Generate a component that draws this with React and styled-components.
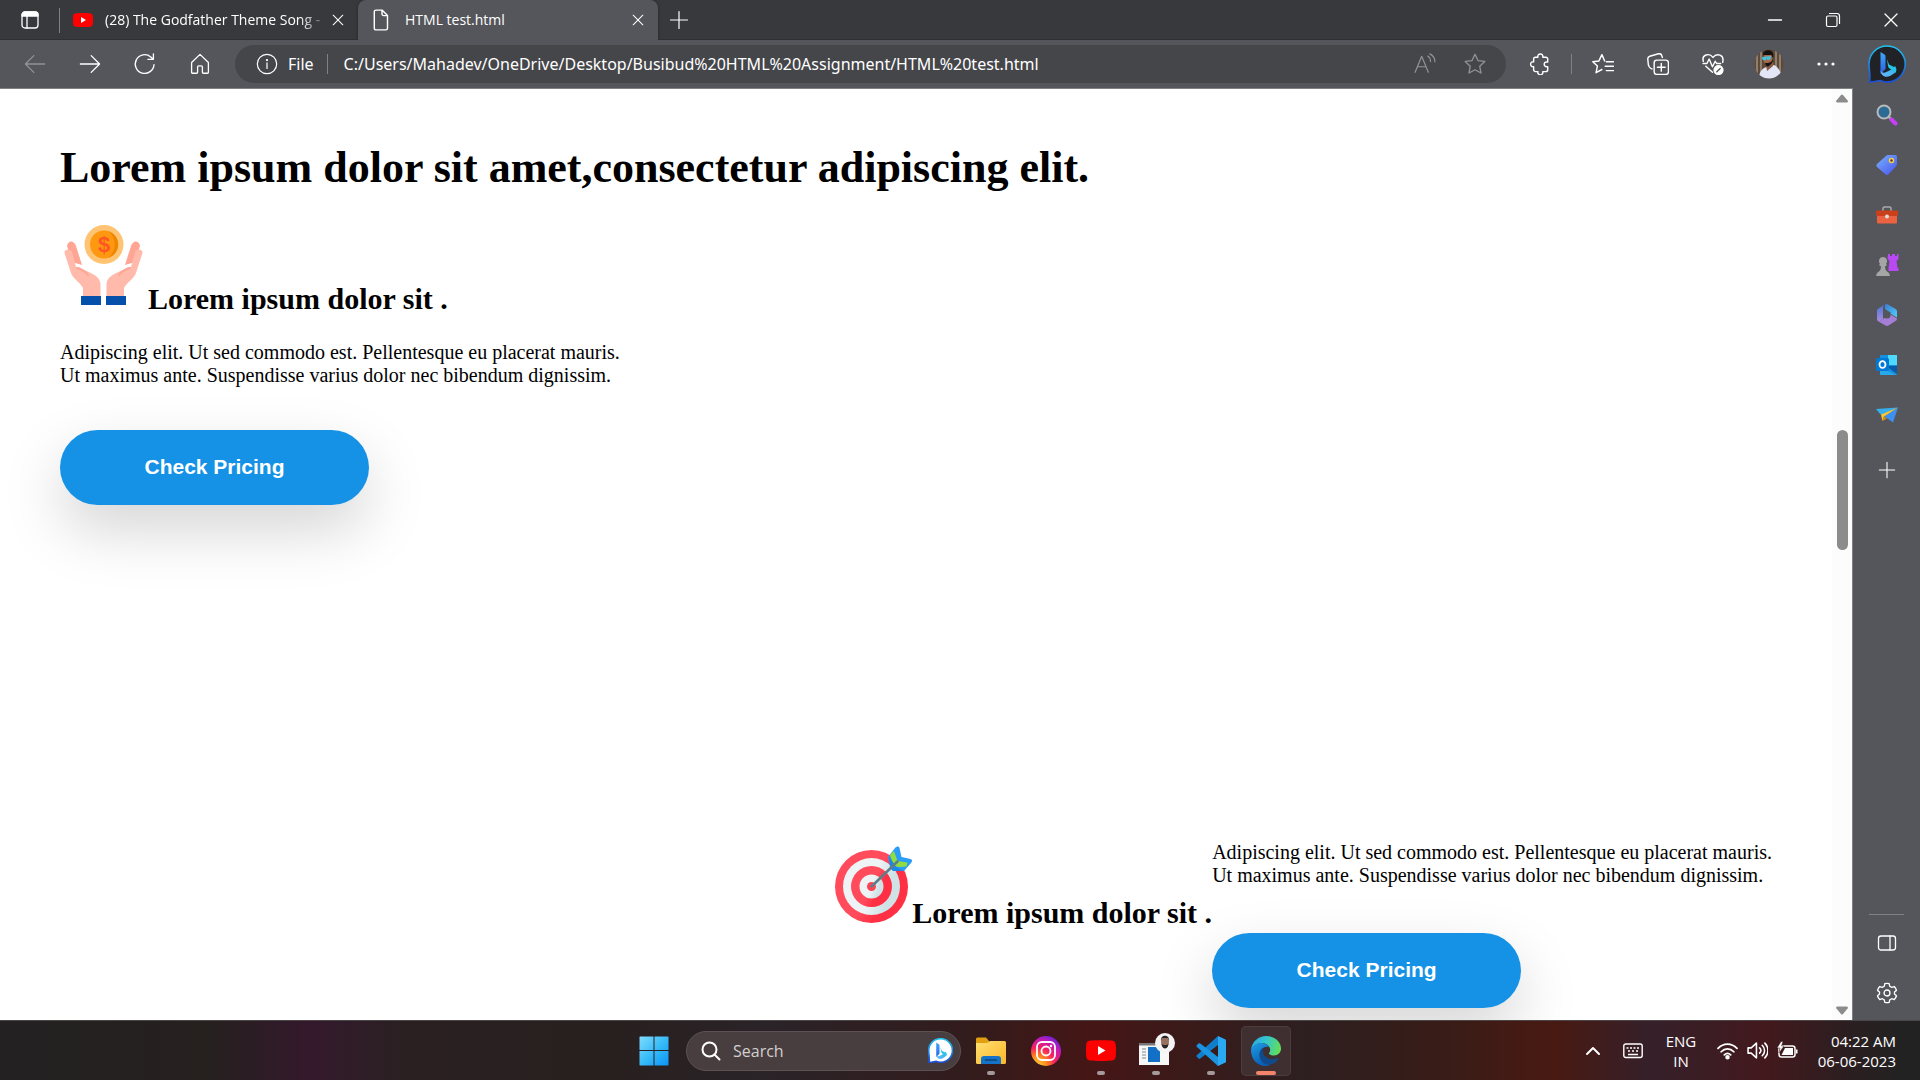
import React from 'react';
import styled, { createGlobalStyle, css } from 'styled-components';

const GlobalStyle = createGlobalStyle`
  *, *::before, *::after { box-sizing: border-box; }
  html, body { margin: 0; padding: 0; overflow: hidden; }
  body { font-family: 'Open Sans', 'Noto Sans', sans-serif; background: #55565b; }
  button, input { font: inherit; color: inherit; border: 0; background: none; padding: 0; outline: 0; }
  svg { display: block; flex: none; }
`;

const Shell = styled.div`
  display: flex;
  flex-direction: column;
  height: 100vh;
`;

/* ---------- title bar ---------- */

const TitleBar = styled.header`
  display: flex;
  height: 40px;
  flex: none;
  background: #38393c;
  color: #fff;
  box-shadow: inset 0 -1px 0 #2f3033;
`;

const IconButton = styled.button`
  display: flex;
  align-items: center;
  justify-content: center;
  flex: none;
  width: ${(p) => p.$w || 55}px;
  height: ${(p) => p.$h || 40}px;
  color: ${(p) => (p.$dim ? '#919296' : '#fff')};
`;

const Separator = styled.span`
  flex: none;
  align-self: center;
  width: 1px;
  height: ${(p) => p.$h || 20}px;
  margin: 0 ${(p) => p.$gap || 0}px;
  background: #808185;
`;

const Tab = styled.div`
  display: flex;
  align-items: center;
  gap: 12px;
  flex: 0 1 ${(p) => (p.$active ? 300 : 298)}px;
  min-width: 0;
  padding: 0 12px 0 13px;
  font-size: 14px;
  line-height: 20px;
  ${(p) =>
    p.$active &&
    css`
      background: #55565b;
      border-radius: 8px 8px 0 0;
      box-shadow: 0 0 3px #232426;
    `}
`;

const TabTitle = styled.span`
  flex: 1;
  min-width: 0;
  margin-right: -8px;
  overflow: hidden;
  white-space: nowrap;
  mask-image: ${(p) => (p.$fade ? 'linear-gradient(90deg, #000 88%, rgba(0, 0, 0, 0.1))' : 'none')};
`;

const WindowControls = styled.div`
  display: flex;
  margin-left: auto;
`;

/* ---------- toolbar ---------- */

const Toolbar = styled.div`
  display: flex;
  align-items: center;
  flex: none;
  height: 48px;
  padding-left: 7px;
  background: #55565b;
  color: #fff;
`;

const AddressBar = styled.form`
  display: flex;
  align-items: center;
  flex: 1;
  min-width: 0;
  height: 38px;
  margin: 0 7px 0 8px;
  padding: 0 6px 0 21px;
  border-radius: 19px;
  background: #45464a;
  font-family: 'Noto Sans', sans-serif;
  font-size: 16px;
`;

const SchemeLabel = styled.label`
  margin: 0 13px 0 10px;
`;

const AddressInput = styled.input`
  flex: 1;
  min-width: 0;
  height: 30px;
  margin-left: 16px;
`;

const BingButton = styled(IconButton)`
  width: 66px;
`;

/* ---------- body ---------- */

const Body = styled.div`
  display: flex;
  flex: 1;
  min-height: 0;
`;

const Viewport = styled.div`
  display: flex;
  flex: 1;
  min-width: 0;
  min-height: 0;
  border-top: 1px solid #808185;
  border-right: 1px solid #808185;
  background: #fff;
`;

const Page = styled.main`
  flex: 1;
  min-width: 0;
  overflow: hidden;
  padding: 54px 60px 0;
  color: #000;
  font-family: 'Liberation Serif', 'Times New Roman', serif;
  font-size: 20px;
  line-height: 23px;
`;

const Title = styled.h1`
  margin: 0 0 28px;
  font-size: 44px;
  line-height: 50px;
`;

const Feature = styled.section`
  display: ${(p) => (p.$row ? 'flex' : 'block')};
  justify-content: flex-end;
  margin-top: ${(p) => (p.$row ? 316 : 0)}px;
`;

const FeatureTitle = styled.h2`
  display: flex;
  align-items: baseline;
  margin: ${(p) => p.$top || 0}px 0 25px;
  font-size: 30px;
  line-height: 34px;
  white-space: nowrap;
`;

const Copy = styled.p`
  margin: ${(p) => p.$top || 0}px 0 ${(p) => p.$bottom}px;
`;

const PricingButton = styled.button`
  display: block;
  width: 309px;
  height: 75px;
  padding-bottom: 2px;
  border-radius: 38px;
  background: #1592e6;
  box-shadow: 0 25px 60px rgba(0, 0, 0, 0.17);
  color: #fff;
  font-family: 'Liberation Sans', Arial, sans-serif;
  font-size: 21px;
  font-weight: 700;
  line-height: 24px;
`;

const ScrollTrack = styled.div`
  display: flex;
  flex-direction: column;
  align-items: center;
  flex: none;
  width: 20px;
  padding: 5px 0;
  background: #fcfcfc;
`;

const Spacer = styled.span`
  flex: ${(p) => p.$grow} 1 0;
`;

const Thumb = styled.span`
  flex: none;
  width: 11px;
  height: 120px;
  border-radius: 6px;
  background: #8b8b8b;
`;

const Sidebar = styled.aside`
  display: flex;
  flex-direction: column;
  align-items: center;
  flex: none;
  width: 67px;
  padding: 2px 0;
  background: #55565b;
  color: #fff;
`;

const SideRule = styled.hr`
  width: 35px;
  height: 1px;
  margin: auto auto 3px;
  border: 0;
  background: #808185;
`;

/* ---------- taskbar ---------- */

const Taskbar = styled.footer`
  display: grid;
  grid-template-columns: 1fr auto 1fr;
  flex: none;
  height: 60px;
  border-top: 1px solid #4b4546;
  background: linear-gradient(90deg, #232122 0%, #26201f 11%, #34192c 16%, #2a2022 21%, #28201f 32%, #2a2328 40%, #321c1d 50%, #451615 57%, #381b1b 63%, #2d1f20 68%, #341d19 73%, #481a12 81%, #35202a 86%, #43191d 92%, #2c1e20 96%, #222 99%);
  color: #fff;
  font-size: 15px;
  line-height: 20px;
`;

const TaskGroup = styled.div`
  display: flex;
  align-items: center;
  grid-column: 2;
`;

const TaskSearch = styled.label`
  display: flex;
  align-items: center;
  width: 275px;
  height: 40px;
  margin: 0 2px 0 5px;
  padding: 0 7px 0 14px;
  border: 1px solid #5d5153;
  border-radius: 20px;
  background: #483e40;
`;

const TaskInput = styled.input`
  flex: 1;
  min-width: 0;
  margin-left: 12px;
  font-size: 16px;
  line-height: 24px;
  &::placeholder { color: #d3cecf; opacity: 1; }
`;

const TaskButton = styled.button`
  display: flex;
  align-items: center;
  justify-content: center;
  position: relative;
  width: ${(p) => (p.$active ? 50 : 55)}px;
  height: 50px;
  margin: 0 ${(p) => (p.$active ? 3 : 0)}px;
  border-radius: 5px;
  ${(p) =>
    p.$active &&
    css`
      background: #3f2f31;
      box-shadow: inset 0 0 0 1px #4b3c3e;
    `}
  &::after {
    content: '';
    display: ${(p) => (p.$running || p.$active ? 'block' : 'none')};
    position: absolute;
    bottom: 1px;
    width: ${(p) => (p.$active ? 20 : 8)}px;
    height: 4px;
    border-radius: 2px;
    background: ${(p) => (p.$active ? '#f4836b' : '#a59a9b')};
  }
`;

const Tray = styled.div`
  display: flex;
  align-items: center;
  justify-content: flex-end;
  padding-right: 24px;
`;

const TrayText = styled.div`
  width: ${(p) => p.$w}px;
  text-align: ${(p) => p.$align};
  white-space: nowrap;
`;

const TrayIcons = styled.div`
  display: flex;
  align-items: center;
  gap: 9px;
  margin-left: 8px;
`;

/* ---------- icons ---------- */

const Line = ({ size = 20, w = 1.3, children, box = 20 }) => (
  <svg width={size} height={size} viewBox={`0 0 ${box} ${box}`} fill="none" stroke="currentColor" strokeWidth={w} strokeLinecap="round" strokeLinejoin="round" aria-hidden="true">
    {children}
  </svg>
);

const TabActionsIcon = () => (
  <Line>
    <rect x="2" y="2" width="16" height="16" rx="3" />
    <path d="M2 6V5a3 3 0 0 1 3-3h10a3 3 0 0 1 3 3v1z" fill="currentColor" />
    <path d="M7 6v12" />
  </Line>
);
const YouTubeIcon = ({ w = 20, h = 14 }) => (
  <svg width={w} height={h} viewBox="0 0 30 21" aria-hidden="true">
    <path d="M4 .6C8 0 22 0 26 .6c2.500.4 3.500 1.500 3.700 4 .4 4 .4 8 0 12-.2 2.500-1.200 3.600-3.700 3.900-4 .6-18 .6-22 0C1.500 20.100.5 19 .3 16.500c-.4-4-.4-8 0-12C.5 2.100 1.500.9 4 .6z" fill="#f00" />
    <path d="M12 6v9l7.500-4.500z" fill="#fff" />
  </svg>
);
const FileIcon = () => (
  <Line size={22} w={1.3}>
    <path d="M4.500 1h5.500l5 5v11.500a1.500 1.500 0 0 1-1.500 1.500h-9A1.500 1.500 0 0 1 3 17.500v-15A1.500 1.500 0 0 1 4.500 1zM10 1v3.500A1.500 1.500 0 0 0 11.500 6H15" />
  </Line>
);
const CloseIcon = ({ size = 16 }) => (
  <Line size={size}><path d="M4 4l12 12M16 4L4 16" /></Line>
);
const PlusIcon = ({ size = 20 }) => (
  <Line size={size} w={1.2}><path d="M10 1.500v17M1.500 10h17" /></Line>
);
const MinIcon = () => <Line><path d="M3.500 10h13" /></Line>;
const RestoreIcon = () => (
  <Line w={1.200}>
    <rect x="3.500" y="6" width="10.500" height="10.500" rx="1.500" />
    <path d="M6.500 3.500h7.500a2.500 2.500 0 0 1 2.500 2.500v7.500" />
  </Line>
);
const BackIcon = () => <Line size={24} w={1.1}><path d="M18 10H2M9 3L2 10l7 7" /></Line>;
const ForwardIcon = () => <Line size={24} w={1.1}><path d="M2 10h16M11 3l7 7-7 7" /></Line>;
const RefreshIcon = () => (
  <Line size={24} w={1.1}><path d="M17.500 10.500a7.800 7.800 0 1 1-2.700-6.400l2 1.900M17 1.500v4.600h-4.600" /></Line>
);
const HomeIcon = () => (
  <Line size={24} w={1.1}>
    <path d="M3 8.800L10 2l7 6.800v8a.9.9 0 0 1-.9.900h-3.200a.9.900 0 0 1-.9-.9v-4.300a1 1 0 0 0-1-1H9a1 1 0 0 0-1 1v4.300a.9.900 0 0 1-.9.900H3.900a.9.900 0 0 1-.9-.9z" />
  </Line>
);
const InfoIcon = () => (
  <Line size={22} w={1.100}>
    <circle cx="10" cy="10" r="8.800" />
    <path d="M10 9v5" />
    <circle cx="10" cy="6.400" r=".5" fill="currentColor" />
  </Line>
);
const ReadAloudIcon = () => (
  <Line size={22} w={1.100}>
    <path d="M1 17.500L7 3l6 14.500M3.200 12.500h7.600M12.500 2.800c1.600 1 2.500 2.800 2.500 5M14.500.8C17.300 2.300 19 4.800 19 8" />
  </Line>
);
const starPath = 'M10 1.200l2.700 5.700 6.200.8-4.600 4.300 1.200 6.200L10 15.200l-5.500 3 1.200-6.200L1.100 7.700l6.200-.8z';
const StarIcon = () => <Line size={22} w={1.200}><path d={starPath} /></Line>;
const PuzzleIcon = () => (
  <Line size={22} w={1.300}>
    <path d="M4.700 3.800h2.500a2.300 2.300 0 1 1 4.400 0h2.800A1.700 1.700 0 0 1 16.100 5.500v2.600h-1a2.200 2.200 0 1 0 0 4.400h1v2.700a1.700 1.700 0 0 1-1.700 1.700h-2.800a2.300 2.300 0 1 1-4.400 0H5a1.700 1.700 0 0 1-1.700-1.700v-2.700a2.300 2.300 0 1 1 0-4.500V5.500A1.600 1.600 0 0 1 4.700 3.800z" />
  </Line>
);
const FavoritesIcon = () => (
  <Line size={22} w={1.300}>
    <path d="M11.500 7.200L9 1.500 6.300 7.200l-5.600.700 4.200 4-1.200 6 5.300-2.900M13 8h6.500M12 12h7.500M13 16h6.500" />
  </Line>
);
const CollectionsIcon = () => (
  <Line size={22} w={1.300}>
    <rect x="6.500" y="6.500" width="13" height="13" rx="2.500" />
    <path d="M13 9.500v7M9.500 13h7M4.500 14.500l-1-.5C2 13.200 1.500 12 1.200 10.500L.7 5.500A2.500 2.500 0 0 1 2.500 3l8-2.300A2.500 2.500 0 0 1 13.500 2.500l.5 1.500" />
  </Line>
);
const HealthIcon = () => (
  <Line size={22} w={1.300}>
    <path d="M9.500 17.500L3.500 12M1.200 7.500C-.5 1.500 6.500-.5 10 4c3.500-4.500 10.500-2.500 8.800 4.500M1 9.500h3.500l2-4 3 7 2.500-5 1.200 2H17" />
    <circle cx="15" cy="15.500" r="4" fill="currentColor" />
    <path d="M13.500 17l3-3" stroke="#55565b" />
  </Line>
);
const DotsIcon = () => (
  <svg width="20" height="20" viewBox="0 0 20 20" fill="currentColor" aria-hidden="true">
    <circle cx="3" cy="10" r="1.600" /><circle cx="10" cy="10" r="1.600" /><circle cx="17" cy="10" r="1.600" />
  </svg>
);
const Avatar = () => (
  <svg width="30" height="30" viewBox="0 0 30 30" aria-hidden="true">
    <clipPath id="face"><circle cx="15" cy="15" r="14.500" /></clipPath>
    <g clipPath="url(#face)">
      <path d="M0 0h30v30H0z" fill="#5d4a3a" />
      <path d="M3 0v30M7 0v30M22 0v30M26 0v30" stroke="#a3927e" strokeWidth="1.500" />
      <path d="M5 30c0-7 3-11 8-12l7-2c4 2 7 6 8 14z" fill="#e3e6f7" />
      <path d="M12 16l1 6 6-5v-4z" fill="#8c5a40" />
      <ellipse cx="14" cy="10" rx="4.500" ry="6.500" fill="#a8694b" />
      <path d="M11 14c1 4 3 4 4 3s4-3 4-7l-2 3-3 1zM9 6c0-5 5-5 7-4.500 3 .5 4 4 3 8L17.500 6z" fill="#15120f" />
      <path d="M8 8l9-1-.5 3.500-3 .5-1-1.500-1 2-3-.5z" fill="#42c3dd" />
    </g>
  </svg>
);
const BingIcon = ({ size = 38, light }) => {
  const id = light ? 'bl' : 'bd';
  return (
    <svg width={size} height={size} viewBox="0 0 38 38" aria-hidden="true">
      <defs>
        <linearGradient id={`${id}a`} x1="0" y1="0" x2="0" y2="1"><stop offset="0" stopColor="#20c3ee" /><stop offset="1" stopColor="#1b4fd8" /></linearGradient>
        <linearGradient id={`${id}b`} x1="0" y1="0" x2="0" y2="1"><stop offset="0" stopColor="#3fa9f7" /><stop offset="1" stopColor="#2b5fe8" /></linearGradient>
        <linearGradient id={`${id}c`} x1="0" y1="1" x2="1" y2="0"><stop offset="0" stopColor="#6fb8ff" /><stop offset="1" stopColor="#1fb5ea" /></linearGradient>
      </defs>
      <path d="M19 1a18 18 0 1 1-7 34.500c-3 .5-7 1.700-10.500 1.500C3 33 1 26 1 19A18 18 0 0 1 19 1z" fill={light ? '#fff' : '#202226'} stroke={`url(#${id}a)`} strokeWidth={light ? 2.5 : 1.600} />
      <path d="M12.500 7l4 2.500a2 2 0 0 1 1 1.700V24l-5 5z" fill={`url(#${id}b)`} />
      <path d="M12.500 25c0 6 5 8 9.500 6l4-2.500c3-2 3-5 1-7.500-2 3-6 5-10 6.500-2 .7-4-.5-4.500-2.500z" fill={`url(#${id}c)`} />
      <path d="M19 14l2 5.500 3 1.500c4 2 5 4.500 3.500 7.500 1-4-7-3-7.500-7.500z" fill="#24c8e6" />
    </svg>
  );
};
const UpArrow = () => <svg width="12" height="9" viewBox="0 0 12 9" aria-hidden="true"><path d="M5 1q1-1 2 0l5 6q0 1-1 1.500H1Q0 8 0 7z" fill="#8b8b8b" /></svg>;
const DownArrow = () => <svg width="12" height="9" viewBox="0 0 12 9" aria-hidden="true"><path d="M5 8q1 1 2 0l5-6q0-1-1-1.500H1Q0 1 0 2z" fill="#8b8b8b" /></svg>;

const SearchColor = () => (
  <svg width="22" height="22" viewBox="0 0 22 22" aria-hidden="true">
    <path d="M12.500 12.500l4 4" stroke="#aaa" strokeWidth="2.500" />
    <path d="M15.500 15.500l4 4" stroke="#c63ff5" strokeWidth="4" strokeLinecap="round" />
    <circle cx="8" cy="8" r="6.500" fill="#2b6b96" stroke="#b9b9b9" strokeWidth="2" />
  </svg>
);
const TagColor = () => (
  <svg width="22" height="22" viewBox="0 0 22 22" aria-hidden="true">
    <defs><linearGradient id="tag" x1="0" y1="0" x2="1" y2="1"><stop offset="0" stopColor="#77b5ff" /><stop offset="1" stopColor="#4a50ec" /></linearGradient></defs>
    <path d="M12 1h7.500A1.500 1.500 0 0 1 21 2.500V10c0 1-.3 1.500-1 2.200l-7.500 8a2 2 0 0 1-3 0L1 13c-.8-.8-.8-2 0-3l9-8c.6-.6 1.200-1 2-1z" fill="url(#tag)" />
    <circle cx="15.500" cy="6.500" r="2" fill="#3b3d50" stroke="#ffce3d" strokeWidth="1.500" />
  </svg>
);
const ToolboxColor = () => (
  <svg width="22" height="22" viewBox="0 0 22 22" aria-hidden="true">
    <path d="M7 7V4.500A1.500 1.500 0 0 1 8.500 3h5A1.500 1.500 0 0 1 15 4.500V7" fill="none" stroke="#aaa" strokeWidth="1.500" />
    <rect x="1" y="11" width="20" height="8.500" rx="1" fill="#ea6240" />
    <rect x="0" y="6.500" width="22" height="5.500" rx="1" fill="#c9401b" />
    <circle cx="11" cy="12.500" r="2" fill="#ddd" />
  </svg>
);
const ChessColor = () => (
  <svg width="24" height="24" viewBox="0 0 24 24" aria-hidden="true">
    <path d="M13 1h2v2h2V1h3v2h2V1h1.500v5l-2 2 1 7h1v3h-10v-3l1-7-2-2z" fill="#b94af3" />
    <path d="M8 4a4 4 0 0 1 3 6.700l1 1.300-2 1.500c0 3 1 4.500 4 6.500l1 3H1l1-3c3-2 4-3.500 4-6.500L4 12l1-1.300A4 4 0 0 1 8 4z" fill="#a5a5a5" />
  </svg>
);
const OfficeColor = () => (
  <svg width="22" height="22" viewBox="0 0 22 22" aria-hidden="true">
    <defs>
      <linearGradient id="off" x1="0" y1="0" x2="1" y2="1"><stop offset="0" stopColor="#3a7bd8" /><stop offset="1" stopColor="#52d0f5" /></linearGradient>
      <linearGradient id="off2" x1="0" y1="0" x2="0" y2="1"><stop offset="0" stopColor="#4a78d4" /><stop offset="1" stopColor="#a98be0" /></linearGradient>
    </defs>
    <path d="M9 .500a3 3 0 0 1 3 0l7.500 4.500c1 .6 1.500 1.500 1.500 2.500v6l-6.500-3.800V8.500L9 5z" fill="url(#off)" />
    <path d="M9 .500c-1.500 1-2 2-2 3.500v11L2.500 17.500C1.400 16.900 1 16 1 14.800V7c0-1 .5-2 1.500-2.500z" fill="url(#off2)" />
    <path d="M2.500 17.500l12-7L21 14.500c0 1-.5 2-1.500 2.500l-7 4.500a3 3 0 0 1-3 0z" fill="#a57fd6" />
    <circle cx="11" cy="11" r="3.500" fill="#55565b" />
  </svg>
);
const OutlookColor = () => (
  <svg width="22" height="22" viewBox="0 0 22 22" aria-hidden="true">
    <path d="M4 1h16a1 1 0 0 1 1 1v18a1 1 0 0 1-1 1H4z" fill="#1490df" />
    <path d="M12 1h9v10h-9z" fill="#50d9ff" />
    <path d="M12 12h9v8l-7-5z" fill="#0a5aa8" />
    <path d="M4 13l16 8H5a1 1 0 0 1-1-1z" fill="#28a8ea" />
    <rect y="4" width="13" height="13" rx="1.500" fill="#0078d4" />
    <ellipse cx="6.500" cy="10.500" rx="3" ry="3.400" fill="none" stroke="#fff" strokeWidth="1.800" />
  </svg>
);
const PlaneColor = () => (
  <svg width="24" height="22" viewBox="0 0 24 22" aria-hidden="true">
    <path d="M1 5l22-1.500L6 11z" fill="#35b0ee" />
    <path d="M23 3.500L18 18.500 9 12z" fill="#3d8ff0" />
    <path d="M23 3.500L6 10.500 7.500 17 9 12.500z" fill="#ffc62e" />
    <path d="M7.500 17L9 12.500l3 2z" fill="#d98c12" />
  </svg>
);
const PanelIcon = () => (
  <Line w={1.300}><rect x="1.500" y="3" width="17" height="14" rx="2.500" /><path d="M13 3v14" /></Line>
);
const GearIcon = () => (
  <Line size={22} w={1.200}>
    <path d="M8 1.500c1.300-.3 2.700-.3 4 0l.5 2.400 1.800 1 2.300-.8c1 1 1.700 2.200 2 3.500L16.800 9v2l1.800 1.500c-.3 1.300-1 2.500-2 3.500l-2.300-.8-1.800 1-.5 2.300c-1.300.3-2.700.3-4 0l-.5-2.300-1.800-1-2.300.8c-1-1-1.700-2.200-2-3.500L3.200 11V9L1.400 7.600c.3-1.300 1-2.500 2-3.500l2.300.8 1.800-1z" />
    <circle cx="10" cy="10" r="2.700" />
  </Line>
);

const HandsIcon = () => (
  <svg width="88" height="88" viewBox="0 0 88 88" role="img" aria-label="Hands holding a coin">
    <circle cx="44" cy="23.500" r="19.500" fill="#ffc473" />
    <circle cx="44" cy="23.500" r="14" fill="#ff9811" />
    <path d="M48 10a14 14 0 0 1 0 27 17 17 0 0 0 0-27z" fill="#ee8700" />
    <text x="44" y="31" textAnchor="middle" fontFamily="Liberation Sans, Arial, sans-serif" fontSize="22" fontWeight="700" fill="#ff5722">$</text>
    {[0, 1].map((i) => (
      <g key={i} transform={i ? 'matrix(-1 0 0 1 87 0)' : undefined}>
        <path d="M7 25c1-6 7-6 9 0l6 19-10-3z" fill="#ffa593" />
        <path d="M4.500 32c-.5-4 6-5 7.500-1l4 15c2 0 4 0 6 2 9 4 18 7 18.500 15v15H23V67c-3-6-10-9-12-15z" fill="#ffbaab" />
        <path d="M17 47c4 1 8 3 11 7" stroke="#ffa593" strokeWidth="2" strokeLinecap="round" fill="none" />
        <path d="M21 75h20v9H21z" fill="#0550ab" />
      </g>
    ))}
  </svg>
);
const TargetIcon = () => (
  <svg width="77" height="77" viewBox="0 0 77 77" role="img" aria-label="Target with an arrow">
    <defs>
      <linearGradient id="tr" x1="0" x2="1" y2=".5"><stop offset=".6" stopColor="#ff4b5b" /><stop offset=".8" stopColor="#ff3043" /></linearGradient>
      <linearGradient id="tw" x1="0" x2="1" y2=".3"><stop offset=".6" stopColor="#eef3f5" /><stop offset=".9" stopColor="#cfe3e7" /></linearGradient>
    </defs>
    <circle cx="36.500" cy="40.500" r="36.500" fill="url(#tr)" />
    <circle cx="36.500" cy="40.500" r="28.500" fill="url(#tw)" />
    <circle cx="36.500" cy="40.500" r="20.500" fill="url(#tr)" />
    <circle cx="36.500" cy="40.500" r="12" fill="url(#tw)" />
    <circle cx="36.500" cy="40.500" r="4.500" fill="#ff4353" />
    <path d="M53 11l7-9c2-2 4-2 4.500 0l2 9 9 2c2 .5 2 2.500.5 4l-7 8-13-2z" fill="#2b9cf7" />
    <path d="M55 9l4-4 3.500 10 10 1.500-1 4-7 .5-6-1z" fill="#91dc3e" />
    <path d="M54 10l1 12 3 3 11 0-8-4z" fill="#1d87e5" />
    <path d="M36.500 40.500l26-25" stroke="#5f7d89" strokeWidth="2.500" strokeLinecap="round" />
  </svg>
);

const WindowsIcon = () => (
  <svg width="30" height="30" viewBox="0 0 30 30" aria-hidden="true">
    <defs><linearGradient id="win" x1="0" y1="0" x2="1" y2="1"><stop offset="0" stopColor="#80dcff" /><stop offset=".5" stopColor="#38bcf8" /><stop offset="1" stopColor="#0b93f5" /></linearGradient></defs>
    <path d="M1 .5h13.500V14H.5V1zM15.500.5H29l.5.5v13h-14zM.5 15h14v14.500H1L.5 29zM15.500 15h14v14l-.5.5H15.500z" fill="url(#win)" />
  </svg>
);
const SearchIcon = () => <Line w={2}><circle cx="8.500" cy="8.500" r="7" /><path d="M13.500 13.500l5 5" /></Line>;
const FolderIcon = () => (
  <svg width="30" height="28" viewBox="0 0 30 28" aria-hidden="true">
    <defs><linearGradient id="fol" x1="0" y1="0" x2="1" y2="1"><stop offset="0" stopColor="#ffdf71" /><stop offset="1" stopColor="#fbb729" /></linearGradient></defs>
    <path d="M0 2a1.500 1.500 0 0 1 1.500-1.500H10L13 4v4H0z" fill="#e0a010" />
    <path d="M0 6h11l3-2h14.500A1.500 1.500 0 0 1 30 5.500v20a1.500 1.500 0 0 1-1.500 1.500h-27A1.500 1.500 0 0 1 0 25.500z" fill="url(#fol)" />
    <path d="M5 27v-5a3 3 0 0 1 3-3h14a3 3 0 0 1 3 3v5z" fill="#1473c8" />
    <path d="M9 23h12" stroke="#0c4477" strokeWidth="1.500" />
  </svg>
);
const InstagramIcon = () => (
  <svg width="30" height="30" viewBox="0 0 30 30" aria-hidden="true">
    <defs><radialGradient id="ig" cx=".2" cy="1" r="1.100"><stop offset="0" stopColor="#ffd23c" /><stop offset=".3" stopColor="#ff8a1c" /><stop offset=".55" stopColor="#f7215e" /><stop offset=".8" stopColor="#c61bb0" /><stop offset="1" stopColor="#6a21e0" /></radialGradient></defs>
    <circle cx="15" cy="15" r="15" fill="url(#ig)" />
    <g fill="none" stroke="#fff" strokeWidth="1.800"><rect x="6" y="6" width="18" height="18" rx="5" /><circle cx="15" cy="15" r="4.500" /></g>
    <circle cx="20" cy="10" r="1.200" fill="#fff" />
  </svg>
);
const ProfileAppIcon = () => (
  <svg width="38" height="44" viewBox="-1 -2 38 44" aria-hidden="true">
    <path d="M1 12h30v22H1z" fill="#f7f7f7" /><path d="M1 12h30v2.500H1z" fill="#777" />
    <rect x="10" y="16" width="12" height="15" fill="#1470c7" />
    <path d="M4 18h4M4 21h4M4 24h4M4 27h4" stroke="#888" />
    <circle cx="27" cy="12" r="10" fill="#f4f4f4" />
    <ellipse cx="27" cy="11" rx="4" ry="6" fill="#98705f" />
    <path d="M23 10c-1-7 9-7 8 0l-1-3h-6zM23.500 13c1 6 6 6 7 0l-2 1h-3z" fill="#2a2427" />
  </svg>
);
const VSCodeIcon = () => (
  <svg width="30" height="30" viewBox="0 0 30 30" aria-hidden="true">
    <path d="M22 0L1 19c-.8.700-.8 1.500 0 2l1.500 1.500c.5.500 1.200.5 1.800 0L22 9z" fill="#0f7fcd" />
    <path d="M22 30L1 11c-.8-.7-.8-1.500 0-2l1.500-1.500c.5-.5 1.200-.5 1.800 0L22 21z" fill="#1a93e0" />
    <path d="M22 0l7 3.200c.6.300 1 .8 1 1.500v20.600c0 .7-.4 1.200-1 1.500L22 30z" fill="#2aa8f2" />
  </svg>
);
const EdgeIcon = () => (
  <svg width="30" height="30" viewBox="0 0 30 30" aria-hidden="true">
    <defs>
      <linearGradient id="e1" x1="0" y1=".3" x2="1" y2=".5"><stop offset="0" stopColor="#2aa8e6" /><stop offset=".5" stopColor="#36c6c9" /><stop offset="1" stopColor="#62df55" /></linearGradient>
      <linearGradient id="e2" x1="0" y1="0" x2=".5" y2="1"><stop offset="0" stopColor="#1e9ee4" /><stop offset="1" stopColor="#0b5cb5" /></linearGradient>
    </defs>
    <path d="M0 14C1 5 8 0 15 0c9 0 15 6 15 12.500 0 4-3 7-7 7-3 0-5-1-5-2.200 0-.8 1.200-1.300 1.200-3.300 0-4-4-7-8.500-7C6 7 2 10 0 14z" fill="url(#e1)" />
    <path d="M0 14c2-5 6-7 10.500-7 3 0 6 1.500 7.500 4-5-1-8.500 2-8.500 7 0 6 4.500 10.500 10 10.500-2 1-4 1.500-5 1.500C6 30 0 23 0 14z" fill="url(#e2)" />
    <path d="M12.500 11.500C8 14 7 20 10.500 25c3 4 8 4.500 13 2 1.500-1 3-2.500 4-4.500.3-.6-.2-.8-.7-.5-6 3-15 0-15-7 0-1.500.3-2.500.7-3.500z" fill="#114a8b" />
  </svg>
);
const ChevronIcon = () => <Line w={2}><path d="M4 13l6-6 6 6" /></Line>;
const KeyboardIcon = () => (
  <svg width="20" height="16" viewBox="0 0 20 16" fill="none" stroke="currentColor" strokeWidth="1.400" aria-hidden="true">
    <rect x=".8" y="1" width="18.400" height="13.500" rx="2" />
    <path d="M3.500 5h2M7 5h2M10.500 5h2M14 5h2M5 8h2M9 8h2M13 8h2M5 11.500h10" strokeWidth="1.600" />
  </svg>
);
const WifiIcon = () => (
  <Line size={21} w={1.700}>
    <path d="M1 8c5-5.500 13-5.500 18 0M4 11.200c3.500-3.800 8.500-3.800 12 0M7 14.200c2-2 4-2 6 0" /><circle cx="10" cy="16.500" r="1.300" fill="currentColor" />
  </Line>
);
const VolumeIcon = () => (
  <Line size={21} w={1.500}>
    <path d="M1 7.500h3L9 3v14l-5-4.500H1zM12 7.500c1.500 1.500 1.500 3.500 0 5M14.500 5c3 3 3 7 0 10M17 3c4 4 4 10 0 14" />
  </Line>
);
const BatteryIcon = () => (
  <svg width="21" height="20" viewBox="0 0 21 20" aria-hidden="true">
    <rect x="2" y="5" width="16" height="11" rx="2.500" fill="none" stroke="#fff" strokeWidth="1.500" />
    <path d="M8 7h8v7H4.500zM19 8.500h1.500v4H19z" fill="#fff" />
    <path d="M4 .5L0 7h3l-1 5 5-7H4.500L6 .5z" fill="#fff" stroke="#3c1c22" strokeWidth=".5" />
  </svg>
);

/* ---------- data ---------- */

const sideItems = [
  ['Search', SearchColor],
  ['Shopping', TagColor],
  ['Tools', ToolboxColor],
  ['Games', ChessColor],
  ['Microsoft 365', OfficeColor],
  ['Outlook', OutlookColor],
  ['Drop', PlaneColor],
];

const taskItems = [
  { name: 'File Explorer', icon: <FolderIcon />, running: true },
  { name: 'Instagram', icon: <InstagramIcon /> },
  { name: 'YouTube', icon: <YouTubeIcon w={30} h={21} />, running: true },
  { name: 'Profile window', icon: <ProfileAppIcon />, running: true },
  { name: 'Visual Studio Code', icon: <VSCodeIcon />, running: true },
  { name: 'Microsoft Edge', icon: <EdgeIcon />, active: true },
];

const CopyText = (props) => (
  <Copy {...props}>
    Adipiscing elit. Ut sed commodo est. Pellentesque eu placerat mauris.
    <br />
    Ut maximus ante. Suspendisse varius dolor nec bibendum dignissim.
  </Copy>
);

export default function App() {
  return (
    <Shell>
      <GlobalStyle />
      <TitleBar>
        <IconButton $w={59} aria-label="Tab actions"><TabActionsIcon /></IconButton>
        <Separator $h={25} />
        <Tab>
          <YouTubeIcon />
          <TabTitle $fade>(28) The Godfather Theme Song -</TabTitle>
          <IconButton $w={16} aria-label="Close tab"><CloseIcon /></IconButton>
        </Tab>
        <Tab $active>
          <FileIcon />
          <TabTitle>HTML test.html</TabTitle>
          <IconButton $w={16} aria-label="Close tab"><CloseIcon /></IconButton>
        </Tab>
        <IconButton $w={42} aria-label="New tab"><PlusIcon /></IconButton>
        <WindowControls>
          <IconButton $w={58} aria-label="Minimize"><MinIcon /></IconButton>
          <IconButton $w={58} aria-label="Restore"><RestoreIcon /></IconButton>
          <IconButton $w={58} aria-label="Close"><CloseIcon size={20} /></IconButton>
        </WindowControls>
      </TitleBar>

      <Toolbar>
        <IconButton $dim aria-label="Back"><BackIcon /></IconButton>
        <IconButton aria-label="Forward"><ForwardIcon /></IconButton>
        <IconButton aria-label="Refresh"><RefreshIcon /></IconButton>
        <IconButton aria-label="Home"><HomeIcon /></IconButton>
        <AddressBar onSubmit={(e) => e.preventDefault()}>
          <InfoIcon />
          <SchemeLabel htmlFor="address">File</SchemeLabel>
          <Separator />
          <AddressInput id="address" defaultValue="C:/Users/Mahadev/OneDrive/Desktop/Busibud%20HTML%20Assignment/HTML%20test.html" />
          <IconButton $w={50} $h={38} $dim type="button" aria-label="Read aloud"><ReadAloudIcon /></IconButton>
          <IconButton $w={50} $h={38} $dim type="button" aria-label="Add to favorites"><StarIcon /></IconButton>
        </AddressBar>
        <IconButton aria-label="Extensions"><PuzzleIcon /></IconButton>
        <Separator $gap={3} />
        <IconButton aria-label="Favorites"><FavoritesIcon /></IconButton>
        <IconButton aria-label="Collections"><CollectionsIcon /></IconButton>
        <IconButton aria-label="Browser essentials"><HealthIcon /></IconButton>
        <IconButton $w={57} aria-label="Profile"><Avatar /></IconButton>
        <IconButton $w={57} aria-label="Settings and more"><DotsIcon /></IconButton>
        <BingButton aria-label="Bing chat"><BingIcon /></BingButton>
      </Toolbar>

      <Body>
        <Viewport>
          <Page>
            <Title>Lorem ipsum dolor sit amet,consectetur adipiscing elit.</Title>
            <Feature>
              <FeatureTitle><HandsIcon />Lorem ipsum dolor sit .</FeatureTitle>
              <CopyText $bottom={43} />
              <PricingButton>Check Pricing</PricingButton>
            </Feature>
            <Feature $row>
              <FeatureTitle $top={25}><TargetIcon />Lorem ipsum dolor sit .</FeatureTitle>
              <div>
                <CopyText $top={20} $bottom={46} />
                <PricingButton>Check Pricing</PricingButton>
              </div>
            </Feature>
          </Page>
          <ScrollTrack aria-hidden="true">
            <UpArrow />
            <Spacer $grow={327} />
            <Thumb />
            <Spacer $grow={456} />
            <DownArrow />
          </ScrollTrack>
        </Viewport>
        <Sidebar>
          {sideItems.map(([name, Icon]) => (
            <IconButton key={name} $h={50} aria-label={name}><Icon /></IconButton>
          ))}
          <IconButton $h={60} aria-label="Customize sidebar"><PlusIcon size={18} /></IconButton>
          <SideRule />
          <IconButton $h={50} aria-label="Hide sidebar"><PanelIcon /></IconButton>
          <IconButton $h={50} aria-label="Settings"><GearIcon /></IconButton>
        </Sidebar>
      </Body>

      <Taskbar>
        <TaskGroup>
          <TaskButton aria-label="Start"><WindowsIcon /></TaskButton>
          <TaskSearch>
            <SearchIcon />
            <TaskInput type="text" placeholder="Search" aria-label="Search" />
            <BingIcon size={25} light />
          </TaskSearch>
          {taskItems.map((t) => (
            <TaskButton key={t.name} aria-label={t.name} $running={t.running} $active={t.active}>{t.icon}</TaskButton>
          ))}
        </TaskGroup>
        <Tray>
          <IconButton $w={40} aria-label="Show hidden icons"><ChevronIcon /></IconButton>
          <IconButton $w={40} aria-label="Touch keyboard"><KeyboardIcon /></IconButton>
          <TrayText $w={56} $align="center">ENG<br />IN</TrayText>
          <TrayIcons><WifiIcon /><VolumeIcon /><BatteryIcon /></TrayIcons>
          <TrayText $w={98} $align="right">04:22 AM<br />06-06-2023</TrayText>
        </Tray>
      </Taskbar>
    </Shell>
  );
}
